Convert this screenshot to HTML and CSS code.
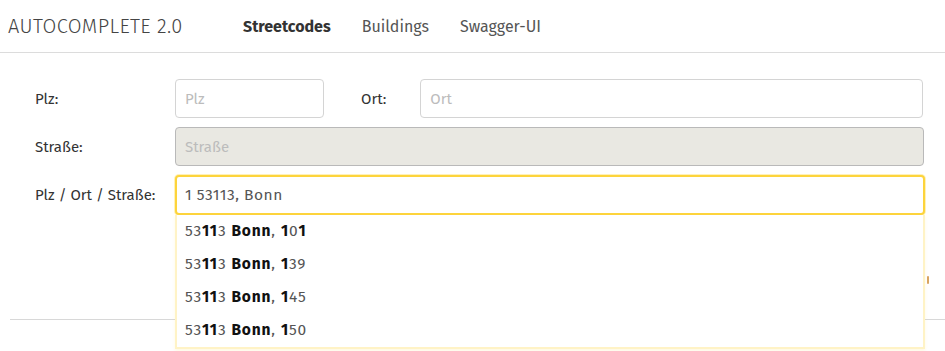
FILE: index.html
```html
<!DOCTYPE html>
<html lang="de">
<head>
    <meta charset="UTF-8">
    <meta name="viewport" content="width=device-width, initial-scale=1.0">
    <title>Autocomplete 2.0</title>
    <link rel="stylesheet" href="styles.css">
</head>
<body>
    <header class="topbar">
      <span class="brand">AUTOCOMPLETE 2.0</span>
      <nav class="nav">
        <a class="active" href="#">Streetcodes</a>
        <a href="#">Buildings</a>
        <a href="#">Swagger-UI</a>
      </nav>
    </header>

    <div class="main">
      <form class="form">
        <label for="plz">Plz:</label>
        <div class="pair">
          <input class="field plz" type="text" id="plz" placeholder="Plz">
          <label for="ort" class="ortlabel">Ort:</label>
          <input class="field" type="text" id="ort" placeholder="Ort">
        </div>

        <label for="strasse">Straße:</label>
        <input class="field" type="text" id="strasse" placeholder="Straße" disabled>

        <label for="search">Plz / Ort / Straße:</label>
        <div class="combo">
          <input class="field focus" type="text" id="search" value="1 53113, Bonn">
          <ul class="suggest">
            <li>53<b>11</b>3 <b>Bonn</b>, <b>1</b>0<b>1</b></li>
            <li>53<b>11</b>3 <b>Bonn</b>, <b>1</b>39</li>
            <li>53<b>11</b>3 <b>Bonn</b>, <b>1</b>45</li>
            <li>53<b>11</b>3 <b>Bonn</b>, <b>1</b>50</li>
          </ul>
        </div>
      </form>
      <div class="actions"><span class="marker"></span></div>
      <hr class="rule">
    </div>
</body>
</html>
```

FILE: styles.css
```css
body{
  margin: 0;
  min-height: 351px;
  font-family: "Fira Sans", "Open Sans", "Noto Sans", sans-serif;
  color: #333;
  background: #fff;
}
.topbar{
  display: flex;
  align-items: center;
  height: 52px;
  border-bottom: 1px solid #dcdcdc;
  padding-left: 8px;
}
.brand{
  font-size: 20px;
  font-weight: 300;
  color: #444;
  width: 235px;
  letter-spacing: 0.4px;
}
.nav{
  display: flex;
  gap: 31px;
}
.nav a{
  font-size: 16px;
  color: #555;
  text-decoration: none;
}
.nav a.active{
  font-weight: 700;
  color: #333;
}
.main{
  padding: 26px 16px 30px 35px;
}
.form{
  display: grid;
  grid-template-columns: 140px 749px;
  row-gap: 9px;
  align-items: center;
  font-size: 15px;
}
.form label{
  color: #333;
}
.pair{
  display: flex;
  align-items: center;
}
.ortlabel{
  margin: 0 34px 0 37px;
}
.field{
  box-sizing: border-box;
  height: 39px;
  width: 100%;
  border: 1px solid #d4d4d4;
  border-radius: 4px;
  padding: 0 9px;
  font: inherit;
  color: #555;
  background: #fff;
}
.field::placeholder{
  color: #bcbcbc;
}
.plz{
  width: 149px;
  flex: none;
}
.pair .field:last-child{
  width: 503px;
}
.field:disabled{
  background: #e9e8e2;
  border-color: #b9b9b9;
}
.combo{
  position: relative;
}
.focus{
  width: calc(100% + 1px);
  height: 40px;
  border: 2px solid #fdd43c;
  box-shadow: 0 0 0 1px #fff1b8;
  outline: none;
  padding-left: 8px;
  font-size: 15.5px;
  letter-spacing: 0.5px;
}
.suggest{
  position: absolute;
  left: 0;
  right: -1px;
  top: 40px;
  margin: 0;
  padding: 0;
  list-style: none;
  background: #fff;
  border: 2px solid #fff3c6;
  border-top: 0;
  box-shadow: 0 2px 3px rgba(253, 212, 60, 0.15);
  z-index: 2;
}
.suggest li{
  height: 33px;
  line-height: 33px;
  padding-left: 8px;
  color: #555;
  font-size: 15.5px;
  letter-spacing: 0.85px;
}
.suggest b{
  color: #111;
}
.actions{
  display: flex;
  justify-content: flex-end;
  width: 894px;
  margin-top: 61px;
}
.marker{
  width: 2px;
  height: 8px;
  background: #d9a560;
  border-radius: 1px;
}
.rule{
  border: 0;
  border-top: 1px solid #d8d8d8;
  margin: 35px -16px 0 -25px;
}
```
